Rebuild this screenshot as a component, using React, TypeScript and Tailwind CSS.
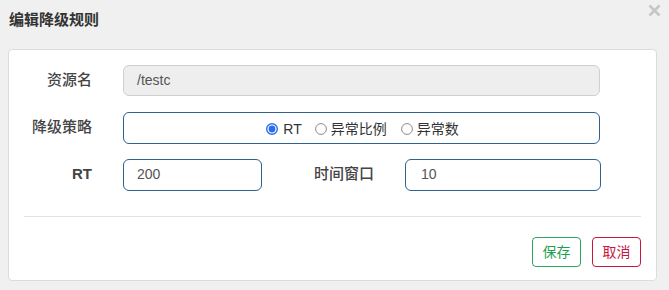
import React from "react";

const cjk = { fontFamily: '"Liberation Sans", "Noto Sans CJK SC", sans-serif' };

function Radio({ checked }: { checked?: boolean }) {
  return checked ? (
    <svg width="12" height="12" viewBox="0 0 12 12" className="shrink-0">
      <circle cx="6" cy="6" r="5.3" fill="none" stroke="#2b6de8" strokeWidth="1.4" />
      <circle cx="6" cy="6" r="3.4" fill="#2b6de8" />
    </svg>
  ) : (
    <svg width="12" height="12" viewBox="0 0 12 12" className="shrink-0">
      <circle cx="6" cy="6" r="5.4" fill="#fff" stroke="#8a8a8a" strokeWidth="1" />
    </svg>
  );
}

export default function App() {
  return (
    <div className="w-[669px] h-[290px] bg-[#f0f0f0] relative overflow-hidden" style={cjk}>
      <div className="h-[49px] pl-[9px] pt-[8px]">
        <span className="text-[15px] font-bold text-[#333] leading-[18px]">编辑降级规则</span>
      </div>
      <svg className="absolute left-[648px] top-[4px]" width="13" height="13" viewBox="0 0 13 13">
        <path d="M1.5 1.5 L11.5 11.5 M11.5 1.5 L1.5 11.5" stroke="#c6c6c6" strokeWidth="2.6" />
      </svg>
      <div className="ml-[8px] w-[649px] h-[232px] bg-white border border-[#dcdcdc] rounded-[4px] pt-[15px]">
        {/* Row 1 */}
        <div className="flex items-center h-[31px]">
          <div className="w-[83px] text-right text-[15px] font-medium text-[#444]">资源名</div>
          <div className="ml-[31px] w-[477px] h-[31px] bg-[#eeeeee] border border-[#cfcfcf] rounded-[6px] flex items-center pl-[13px] text-[14px] text-[#555]">
            /testc
          </div>
        </div>
        {/* Row 2 */}
        <div className="flex items-center h-[31px] mt-[16px]">
          <div className="w-[83px] text-right text-[15px] font-medium text-[#444]">降级策略</div>
          <div className="ml-[31px] w-[477px] h-[32px] border border-[#2f6193] rounded-[6px] flex items-center justify-center pt-[3px] text-[14px] text-[#333]">
            <div className="flex items-center ml-[2px]">
              <Radio checked />
              <span className="ml-[5px]">RT</span>
              <span className="ml-[13px]"><Radio /></span>
              <span className="ml-[4px]">异常比例</span>
              <span className="ml-[14px]"><Radio /></span>
              <span className="ml-[4px]">异常数</span>
            </div>
          </div>
        </div>
        {/* Row 3 */}
        <div className="flex items-center h-[31px] mt-[16px]">
          <div className="w-[83px] text-right text-[15px] font-bold text-[#444]">RT</div>
          <div className="ml-[31px] w-[139px] h-[32px] border border-[#2f6193] rounded-[6px] flex items-center pl-[13px] text-[14px] text-[#555]">
            200
          </div>
          <div className="w-[112px] text-right text-[15px] font-medium text-[#444]">时间窗口</div>
          <div className="ml-[31px] w-[196px] h-[32px] border border-[#2f6193] rounded-[6px] flex items-center pl-[15px] text-[14px] text-[#555]">
            10
          </div>
        </div>
        <div className="mx-[15px] mt-[26px] border-t border-[#e2e2e2]" />
        <div className="flex justify-end gap-[11px] pr-[15px] mt-[20px]">
          <div className="w-[49px] h-[30px] border border-[#27a55a] rounded-[4px] flex items-center justify-center text-[14px] text-[#1e9e54]">
            保存
          </div>
          <div className="w-[49px] h-[30px] border border-[#c8163f] rounded-[4px] flex items-center justify-center text-[14px] text-[#c8163f]">
            取消
          </div>
        </div>
      </div>
    </div>
  );
}
